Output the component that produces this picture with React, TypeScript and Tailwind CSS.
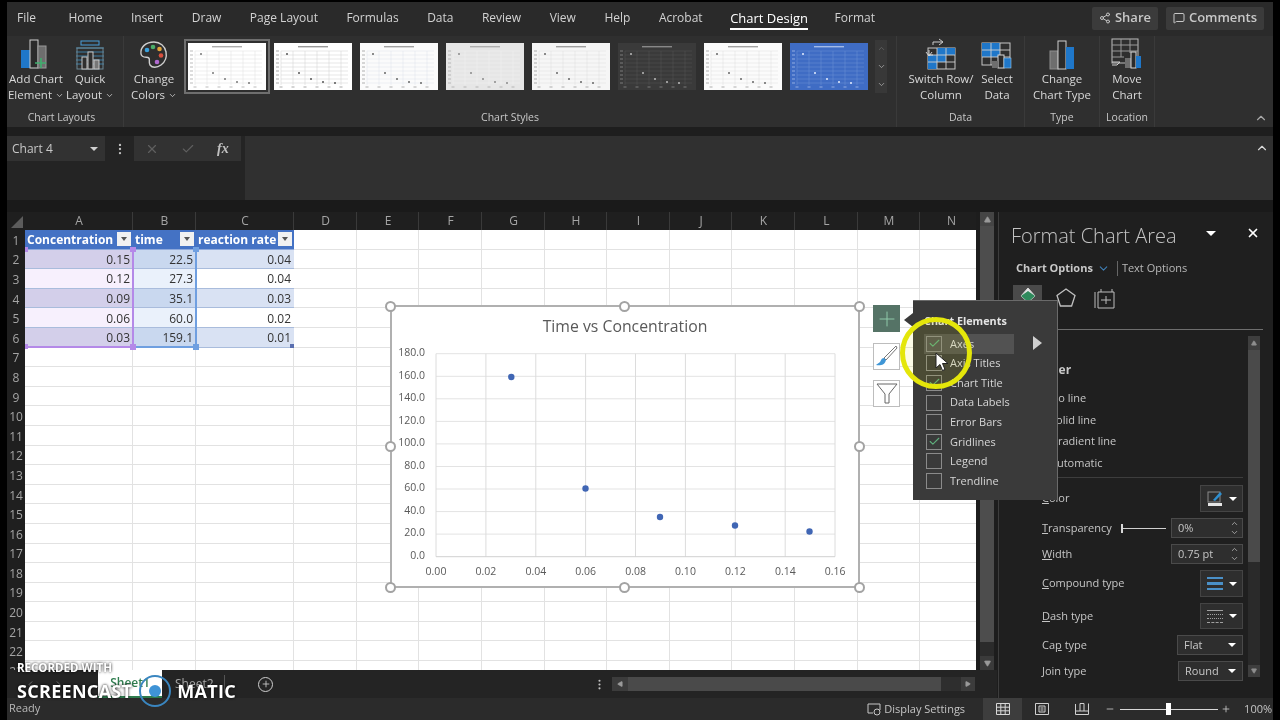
import React from 'react';
import { ChevronDown, ChevronUp, ChevronLeft, ChevronRight, X, Check, Share2, MessageSquare, MoreVertical, Plus, Minus, Triangle } from 'lucide-react';

const tabs = ['File', 'Home', 'Insert', 'Draw', 'Page Layout', 'Formulas', 'Data', 'Review', 'View', 'Help', 'Acrobat', 'Chart Design', 'Format'];
const colLabels = ['A', 'B', 'C', 'D', 'E', 'F', 'G', 'H', 'I', 'J', 'K', 'L', 'M', 'N'];
const rowNumbers = Array.from({ length: 23 }, (_, i) => i + 1);
const tableRows = [
  ['0.15', '22.5', '0.04'],
  ['0.12', '27.3', '0.04'],
  ['0.09', '35.1', '0.03'],
  ['0.06', '60.0', '0.02'],
  ['0.03', '159.1', '0.01'],
];
const chartPoints = [
  [511.3, 377],
  [585.5, 488.5],
  [660, 517],
  [735, 525.5],
  [809.5, 531.5],
];
const thumbDots = [
  [13, 11],
  [25, 30],
  [37, 36],
  [49, 39],
  [61, 40],
];
const thumbs = [
  { bg: '#ffffff', line: '#dcdcdc', ink: '#777777' },
  { bg: '#ffffff', line: '#cccccc', ink: '#555555' },
  { bg: '#fbfbfb', line: '#dde3ea', ink: '#666666' },
  { bg: '#e6e6e6', line: '#f2f2f2', ink: '#8a8a8a' },
  { bg: '#f6f6f6', line: '#dcdcdc', ink: '#666666' },
  { bg: '#3a3a3a', line: '#555555', ink: '#bdbdbd' },
  { bg: '#fbfbfb', line: '#dcdcdc', ink: '#666666' },
  { bg: '#3f6cc4', line: '#6f92d6', ink: '#e6eeff' },
];
const elements = [
  { name: 'Axes', on: true },
  { name: 'Axis Titles', on: false },
  { name: 'Chart Title', on: true },
  { name: 'Data Labels', on: false },
  { name: 'Error Bars', on: false },
  { name: 'Gridlines', on: true },
  { name: 'Legend', on: false },
  { name: 'Trendline', on: false },
];

const Thumb = ({ bg, line, ink }: { bg: string; line: string; ink: string }) => (
  <svg viewBox="0 0 78 47" className="w-[78px] h-[47px] shrink-0">
    <rect width="78" height="47" fill={bg} />
    {[8, 12, 16, 20, 24, 28, 32, 36, 40].map((y) => (
      <g key={y}>
        <line x1="7" x2="74" y1={y} y2={y} stroke={line} strokeWidth="0.5" />
        <rect x="2" y={y - 0.5} width="3" height="1" fill={ink} opacity="0.5" />
      </g>
    ))}
    {[7, 19, 31, 43, 55, 67].map((x) => (
      <g key={x}>
        <line x1={x} x2={x} y1="8" y2="42" stroke={line} strokeWidth="0.5" />
        <rect x={x - 1.5} y="43.500" width="3" height="1" fill={ink} opacity="0.5" />
      </g>
    ))}
    <rect x="24" y="3" width="30" height="1.4" fill={ink} opacity="0.6" />
    {thumbDots.map(([x, y]) => (
      <circle key={x} cx={x} cy={y} r="1" fill={ink} />
    ))}
  </svg>
);

const RibbonButton = ({ icon, line1, line2, caret, className }: { icon: React.ReactNode; line1: string; line2: string; caret?: boolean; className: string }) => (
  <div className={`flex flex-col items-center shrink-0 text-[11.5px] ${className}`}>
    <div className="h-[34px] mb-[1px] flex items-end justify-center">{icon}</div>
    <span className="h-[16px] leading-[16px] whitespace-nowrap">{line1}</span>
    <span className="h-[16px] leading-[16px] whitespace-nowrap flex items-center">
      {line2}
      {caret && <ChevronDown size={9} className="ml-[3px]" />}
    </span>
  </div>
);

const GroupLabel = ({ children, className = '' }: { children: string; className?: string }) => (
  <div className={`text-center leading-[16px] mt-[3px] font-medium text-[#c8c8c8] text-[10.5px] ${className}`}>{children}</div>
);

const AddChartIcon = () => (
  <svg width="32" height="32" viewBox="0 0 32 32">
    <rect x="1" y="12" width="9" height="18" fill="#1f77c9" />
    <rect x="10" y="2" width="8" height="28" fill="#2b2b2b" stroke="#d0d0d0" />
    <rect x="18" y="8" width="8" height="22" fill="#6e6e6e" stroke="#9a9a9a" />
    <path d="M21 20v10M15 25h11" stroke="#3fae6e" strokeWidth="1.6" />
  </svg>
);

const QuickLayoutIcon = () => (
  <svg width="30" height="30" viewBox="0 0 30 30" fill="none">
    <rect x="6" y="1" width="18" height="4" stroke="#4a9fdc" />
    {[8, 12, 16, 20, 24].map((y) => (
      <line key={y} x1="1" x2="29" y1={y} y2={y} stroke="#3d7ea6" />
    ))}
    <rect x="2" y="8" width="26" height="21" stroke="#6d8795" />
    <rect x="7" y="17" width="5" height="12" fill="#2f2f2f" stroke="#c8c8c8" />
    <rect x="13" y="12" width="5" height="17" fill="#2f2f2f" stroke="#c8c8c8" />
    <rect x="19" y="20" width="5" height="9" fill="#777" stroke="#c8c8c8" />
  </svg>
);

const PaletteIcon = () => (
  <svg width="30" height="30" viewBox="0 0 30 30" fill="none">
    <path d="M15 2C7 2 1 7 2 14c.6 4 5 3 7 3.500 3 .8 0 4.500 2 7.500 2 3 7 3 11 0 4-3 6-8 5-13C26 6 21 2 15 2Z" fill="#2e2e2e" stroke="#cfcfcf" strokeWidth="1.4" />
    <circle cx="8" cy="10" r="2.300" fill="#39a0dc" />
    <circle cx="14" cy="7" r="2.300" fill="#4cae6a" />
    <circle cx="20.500" cy="9" r="2.300" fill="#e0a43a" />
    <circle cx="22" cy="15.500" r="2.300" fill="#d8503f" />
    <circle cx="18" cy="22" r="2.300" fill="#b06ad0" />
  </svg>
);

const SwitchRowIcon = () => (
  <svg width="32" height="32" viewBox="0 0 32 32" fill="none">
    <rect x="3" y="10" width="27" height="21" stroke="#c8c8c8" />
    <rect x="12" y="10" width="18" height="7" fill="#1f77c9" />
    <rect x="3" y="17" width="18" height="7" fill="#1f77c9" />
    <rect x="3" y="24" width="9" height="7" fill="#1f77c9" />
    <path d="M3 17h27M3 24h27M12 10v21M21 10v21" stroke="#d0d0d0" strokeWidth="0.9" />
    <path d="M4 12v5h4M1 14l3 4 3-4M8 7V4h9M14 1l4 3-4 3" stroke="#dcdcdc" strokeWidth="0.9" />
  </svg>
);

const SelectDataIcon = () => (
  <svg width="32" height="32" viewBox="0 0 32 32" fill="none">
    <rect x="1" y="5" width="28" height="22" stroke="#c8c8c8" />
    <rect x="1" y="5" width="18" height="14" fill="#1f77c9" />
    <path d="M1 12h28M1 19h28M10 5v22M19 5v22" stroke="#d0d0d0" strokeWidth="0.9" />
    <rect x="17" y="17" width="6" height="13" fill="#2b2b2b" stroke="#d8d8d8" />
    <rect x="23" y="20" width="7" height="10" fill="#1f77c9" stroke="#9cc8e8" strokeWidth="0.6" />
    <rect x="11" y="23" width="6" height="7" fill="#6e6e6e" />
  </svg>
);

const ChangeTypeIcon = () => (
  <svg width="26" height="30" viewBox="0 0 26 30">
    <rect x="1" y="11" width="8" height="18" fill="#6e6e6e" stroke="#8e8e8e" />
    <rect x="9" y="1" width="8" height="28" fill="#2b2b2b" stroke="#d0d0d0" />
    <rect x="17" y="7" width="8" height="22" fill="#1f77c9" />
  </svg>
);

const MoveChartIcon = () => (
  <svg width="32" height="32" viewBox="0 0 32 32" fill="none">
    <rect x="1" y="1" width="26" height="24" stroke="#bdbdbd" />
    <path d="M1 7h26M1 13h26M1 19h12M10 1v18M19 1v14" stroke="#9a9a9a" />
    <rect x="14" y="20" width="6" height="10" fill="#6e6e6e" />
    <rect x="20" y="14" width="5" height="16" fill="#2b2b2b" stroke="#d8d8d8" />
    <rect x="25" y="18" width="5" height="12" fill="#1f77c9" />
    <path d="M1 24h8l-3 3H1" stroke="#cfcfcf" />
  </svg>
);

const Handle = ({ className }: { className: string }) => (
  <div className={`absolute w-[11px] h-[11px] rounded-full bg-white border-2 border-[#a3a3a3] ${className}`} />
);

const SpinBox = ({ value }: { value: string }) => (
  <div className="ml-auto w-[72px] h-full bg-[#2e2e2e] border border-[#4a4a4a] flex items-center pl-[6px] text-[#c4c4c4]">
    <span>{value}</span>
    <div className="ml-auto mr-[3px] flex flex-col text-[#bdbdbd]">
      <ChevronUp size={9} />
      <ChevronDown size={9} />
    </div>
  </div>
);

const IconPick = ({ children }: { children: React.ReactNode }) => (
  <div className="ml-auto w-[43px] h-full bg-[#2e2e2e] border border-[#444444] flex items-center justify-center gap-[6px]">
    {children}
    <div className="w-0 h-0 border-x-[4px] border-x-transparent border-t-[4px] border-t-white" />
  </div>
);

const SelectBox = ({ value, className }: { value: string; className: string }) => (
  <div className={`ml-auto h-full bg-[#2e2e2e] border border-[#4a4a4a] flex items-center pl-[6px] pr-[6px] justify-between text-[#c8c8c8] ${className}`}>
    <span>{value}</span>
    <div className="w-0 h-0 border-x-[4px] border-x-transparent border-t-[4px] border-t-white" />
  </div>
);

const PaneLabel = ({ first, rest }: { first: string; rest: string }) => (
  <span className="text-[#c6c6c6] pl-[12px] whitespace-nowrap">
    <u>{first}</u>
    {rest}
  </span>
);

export default function App() {
  return (
    <div className="relative w-[1280px] h-[720px] overflow-hidden bg-black px-[7px] pt-[2px] text-[12px] text-[#d6d6d6] blur-[0.3px] font-['Open_Sans',sans-serif]">
      {/* tab strip */}
      <div className="h-[34px] bg-[#2a2a2a] flex items-center pl-[10px] pb-[2px]">
        <div className="flex gap-[28.5px] text-[#d2d2d2]">
          {tabs.map((t) => (
            <span key={t} className={`relative whitespace-nowrap ${t === 'File' ? 'mr-[4px]' : ''} ${t === 'Chart Design' ? '-ml-[1px] -mr-[2px] text-white text-[13px] leading-[18px]' : ''}`}>
              {t}
              {t === 'Chart Design' && <span className="absolute left-0 right-0 top-[19px] h-[2px] bg-white" />}
            </span>
          ))}
        </div>
        <div className="ml-auto mr-[9px] flex gap-[8px] text-[13px] font-semibold text-[#c8c8c8]">
          <div className="w-[66px] h-[23px] bg-[#3b3b3b] rounded-[2px] flex items-center justify-center gap-[4px]">
            <Share2 size={12} />
            Share
          </div>
          <div className="w-[98px] h-[23px] bg-[#3b3b3b] rounded-[2px] flex items-center justify-center gap-[4px]">
            <MessageSquare size={12} />
            Comments
          </div>
        </div>
      </div>

      {/* ribbon */}
      <div className="h-[91px] bg-[#2f2f2f] flex text-[#d8d8d8]">
        <div className="w-[117px] flex flex-col border-r border-[#3a3a3a]">
          <div className="h-[70px] flex">
            <RibbonButton className="w-[58px]" icon={<AddChartIcon />} line1="Add Chart" line2="Element" caret />
            <RibbonButton className="w-[50px]" icon={<QuickLayoutIcon />} line1="Quick" line2="Layout" caret />
          </div>
          <GroupLabel className="-ml-[7px]">Chart Layouts</GroupLabel>
        </div>
        <div className="w-[773px] flex flex-col border-r border-[#3a3a3a]">
          <div className="h-[70px] flex">
            <RibbonButton className="w-[60px]" icon={<PaletteIcon />} line1="Change" line2="Colors" caret />
            <div className="flex gap-[8px] pt-[7px] pl-[4px] items-start">
              {thumbs.map((t, i) => (
                <div key={i} className={i === 0 ? 'relative' : ''}>
                  {i === 0 && <div className="absolute -left-[4px] -top-[4px] w-[86px] h-[55px] border-2 border-[#6f6f6f]" />}
                  <Thumb {...t} />
                </div>
              ))}
              <div className="-ml-[1px] flex flex-col w-[12px] h-[53px] -mt-[3px] text-[#b0b0b0] bg-[#383838] items-center justify-around">
                <ChevronUp size={9} className="opacity-40" />
                <ChevronDown size={9} />
                <ChevronDown size={9} />
              </div>
            </div>
          </div>
          <GroupLabel>Chart Styles</GroupLabel>
        </div>
        <div className="w-[128px] flex flex-col border-r border-[#3a3a3a]">
          <div className="h-[70px] flex pl-[8px]">
            <RibbonButton className="w-[72px]" icon={<SwitchRowIcon />} line1="Switch Row/" line2="Column" />
            <RibbonButton className="w-[40px]" icon={<SelectDataIcon />} line1="Select" line2="Data" />
          </div>
          <GroupLabel>Data</GroupLabel>
        </div>
        <div className="w-[75px] flex flex-col border-r border-[#3a3a3a]">
          <div className="h-[70px] flex justify-center">
            <RibbonButton className="w-[70px]" icon={<ChangeTypeIcon />} line1="Change" line2="Chart Type" />
          </div>
          <GroupLabel>Type</GroupLabel>
        </div>
        <div className="w-[55px] flex flex-col border-r border-[#3a3a3a]">
          <div className="h-[70px] flex justify-center">
            <RibbonButton className="w-[50px]" icon={<MoveChartIcon />} line1="Move" line2="Chart" />
          </div>
          <GroupLabel>Location</GroupLabel>
        </div>
        <div className="flex-1 flex items-end justify-end pr-[5px] pb-[2px]">
          <ChevronUp size={14} className="text-[#a8a8a8]" />
        </div>
      </div>

      <div className="h-[9px] bg-[#1e1e1e]" />

      {/* formula bar */}
      <div className="h-[64px] bg-[#242424] flex items-start">
        <div className="w-[98px] h-[25px] bg-[#323232] flex items-center justify-between pl-[5px] pr-[7px] text-[#c8c8c8]">
          Chart 4
          <div className="w-0 h-0 border-x-[4px] border-x-transparent border-t-[4px] border-t-[#d0d0d0]" />
        </div>
        <div className="w-[29px] h-[25px] flex items-center justify-center">
          <MoreVertical size={14} className="text-[#c0c0c0]" />
        </div>
        <div className="w-[107px] h-[25px] bg-[#323232] flex items-center pl-[11px] gap-[22px] text-[#5f5f5f]">
          <X size={14} />
          <Check size={14} />
          <span className="font-['Liberation_Serif',serif] italic font-bold text-[14px] text-[#c0c0c0]">fx</span>
        </div>
        <div className="ml-[4px] flex-1 h-full bg-[#303030] flex justify-end pt-[5px] pr-[4px]">
          <ChevronUp size={14} className="text-[#d8d8d8]" />
        </div>
      </div>

      <div className="h-[12px] bg-[#1a1a1a]" />

      {/* sheet + task pane */}
      <div className="h-[486px] flex bg-[#1d1d1d]">
        <div className="w-[990px] h-full flex flex-col shrink-0">
          <div className="h-[458px] flex">
            <div className="relative w-[969px] h-full overflow-hidden bg-white">
              <div className="grid grid-cols-[18px_108px_63px_98px_63px_62px_63px_63px_62px_63px_62px_63px_63px_62px_63px] grid-rows-[18px_repeat(23,19.6px)] text-[#2b2b2b]">
                <div className="bg-[#1f1f1f] flex items-center justify-center">
                  <div className="w-0 h-0 ml-[2px] mt-[1px] border-l-[12px] border-l-transparent border-b-[12px] border-b-[#5c5c5c]" />
                </div>
                {colLabels.map((c) => (
                  <div key={c} className="bg-[#1f1f1f] border-r border-[#3a3a3a] flex items-center justify-center pl-[1px] text-[#a5a5a5]">
                    {c}
                  </div>
                ))}
                {rowNumbers.map((r) => (
                  <React.Fragment key={r}>
                    <div className="bg-[#1f1f1f] flex items-center justify-center pt-[2px] text-[#a5a5a5]">{r}</div>
                    {colLabels.map((c, ci) => {
                      if (r === 1 && ci < 3) {
                        const label = ['Concentration', 'time', 'reaction rate'][ci];
                        return (
                          <div key={c} className="bg-[#4472c4] text-white font-bold flex items-center px-[2px] pt-[2px] justify-between whitespace-nowrap border-b border-[#8ea9db]">
                            <span>{label}</span>
                            <div className="w-[14px] h-[14px] -mt-[2px] bg-[#f1f1f1] flex items-center justify-center">
                              <div className="w-0 h-0 border-x-[3.5px] border-x-transparent border-t-[4px] border-t-[#555555]" />
                            </div>
                          </div>
                        );
                      }
                      if (r >= 2 && r <= 6 && ci < 3) {
                        const even = r % 2 === 0;
                        const fill = ci === 0 ? (even ? 'bg-[#d3cfea]' : 'bg-[#f7f0fd]') : ci === 1 ? (even ? 'bg-[#c9d8ef]' : 'bg-[#eaf1fb]') : even ? 'bg-[#d9e2f3]' : 'bg-white';
                        return (
                          <div key={c} className={`${fill} border-b border-[#a9bcdc] flex items-center justify-end pr-[3px] pt-[2px] text-[#333333]`}>
                            {tableRows[r - 2][ci]}
                          </div>
                        );
                      }
                      return <div key={c} className="border-r border-b border-[#e2e2e2]" />;
                    })}
                  </React.Fragment>
                ))}
              </div>
            </div>
            <div className="ml-[4px] w-[14px] h-full bg-[#2b2b2b] flex flex-col">
              <div className="h-[14px] bg-[#454545] flex items-center justify-center">
                <Triangle size={7} className="fill-[#9a9a9a] text-[#9a9a9a]" />
              </div>
              <div className="h-[416px] bg-[#4d4d4d]" />
              <div className="mt-auto h-[14px] bg-[#3a3a3a] flex items-center justify-center">
                <Triangle size={7} className="fill-[#9a9a9a] text-[#9a9a9a] rotate-180" />
              </div>
            </div>
          </div>
          {/* sheet tabs */}
          <div className="h-[28px] flex items-center bg-[#242424]">
            <ChevronLeft size={11} className="ml-[18px] text-[#777777]" />
            <ChevronRight size={11} className="ml-[17px] text-[#777777]" />
            <div className="ml-[34px] w-[64px] h-full bg-white text-[#2f7d4f] font-semibold flex items-center justify-center border-b-2 border-[#2f7d4f]">Sheet1</div>
            <div className="ml-[13px] w-[40px] text-[#a8a8a8]">Sheet2</div>
            <div className="ml-[9px] w-px h-[18px] bg-[#555555]" />
            <div className="ml-[33px] w-[15px] h-[15px] rounded-full border border-[#cfcfcf] flex items-center justify-center">
              <Plus size={10} className="text-[#cfcfcf]" />
            </div>
            <MoreVertical size={13} className="ml-[320px] text-[#c0c0c0]" />
            <div className="ml-[6px] w-[363px] h-[14px] bg-[#2e2e2e] flex items-center justify-between">
              <div className="w-[16px] h-full bg-[#3c3c3c] flex items-center justify-center">
                <Triangle size={6} className="fill-[#9a9a9a] text-[#9a9a9a] -rotate-90" />
              </div>
              <div className="flex-1 h-full bg-[#4a4a4a] mr-[20px]" />
              <div className="w-[14px] h-full bg-[#3c3c3c] flex items-center justify-center">
                <Triangle size={6} className="fill-[#9a9a9a] text-[#9a9a9a] rotate-90" />
              </div>
            </div>
          </div>
        </div>

        {/* format chart area pane */}
        <div className="flex-1 border-l border-[#3d3d3d] ml-[1px] bg-[#1f1f1f] flex flex-col text-[11px]">
          <div className="h-[48px] flex items-center pl-[12px]">
            <span className="text-[20px] font-light text-[#c4c4c4] whitespace-nowrap">Format Chart Area</span>
            <div className="ml-[29px] -mt-[6px] w-0 h-0 border-x-[5px] border-x-transparent border-t-[5px] border-t-white" />
            <X size={14} strokeWidth={3} className="ml-[30px] -mt-[6px] text-white" />
          </div>
          <div className="h-[16px] flex items-center pl-[17px]">
            <span className="font-bold text-[#c8c8c8]">Chart Options</span>
            <ChevronDown size={13} className="ml-[4px] text-[#3f7fb5]" />
            <div className="ml-[7px] w-px h-[15px] bg-[#666666]" />
            <span className="ml-[4px] text-[#b8b8b8]">Text Options</span>
          </div>
          <div className="mt-[9px] h-[27px] flex items-center pl-[14px]">
            <div className="w-[29px] h-[27px] bg-[#4a4a4a] flex items-start justify-center pt-[2px]">
              <svg width="20" height="16" viewBox="0 0 20 16">
                <path d="M10 1 3 9l7 6 7-6Z" fill="#e8e8e8" stroke="#d8d8d8" />
                <path d="M3 9l7-5 7 5-7 6Z" fill="#2f8a5c" />
              </svg>
            </div>
            <svg width="24" height="24" viewBox="0 0 24 24" fill="none" stroke="#c0c0c0" strokeWidth="1.3" className="ml-[12px]">
              <path d="M12 2l9 6.500-3.400 10.500H6.400L3 8.500Z" />
            </svg>
            <svg width="22" height="24" viewBox="0 0 22 24" fill="none" stroke="#bdbdbd" className="ml-[16px]">
              <path d="M1 5v16M4 5h16v16H4ZM7 2v3M18 2v3M7 13h10M12 9v8" />
            </svg>
          </div>
          <div className="mt-[17px] ml-[14px] mr-[10px] h-px bg-[#6e6e6e]" />
          <div className="mt-[6px] flex h-[345px] overflow-hidden">
            <div className="flex-1 min-w-0 pl-[31px] pr-[5px] flex flex-col">
              <div className="mt-[24px] h-[20px] shrink-0 flex items-center text-[12px] font-bold text-[#c8c8c8]">Border</div>
              <div className="mt-[8px] h-[20px] shrink-0 flex items-center pl-[20px] text-[#c6c6c6]">No line</div>
              <div className="mt-[2px] h-[20px] shrink-0 flex items-center pl-[20px] text-[#c6c6c6]">Solid line</div>
              <div className="mt-[1px] h-[20px] shrink-0 flex items-center pl-[20px] text-[#c6c6c6]">Gradient line</div>
              <div className="mt-[2px] h-[20px] shrink-0 flex items-center pl-[20px] text-[#c6c6c6]">Automatic</div>
              <div className="mt-[4px] h-px shrink-0 bg-[#3d3d3d]" />
              <div className="mt-[7px] h-[27px] shrink-0 flex items-center">
                <PaneLabel first="C" rest="olor" />
                <IconPick>
                  <svg width="16" height="16" viewBox="0 0 16 16" fill="none">
                    <rect x="1" y="1" width="12" height="10" stroke="#8a8a8a" />
                    <path d="M6 9l7-8 2 2-7 7Z" fill="#2e8fd0" />
                    <rect x="1" y="12" width="14" height="3" fill="#e6e6e6" />
                  </svg>
                </IconPick>
              </div>
              <div className="mt-[6px] h-[20px] shrink-0 flex items-center">
                <PaneLabel first="T" rest="ransparency" />
                <div className="ml-[9px] flex items-center w-[45px] shrink-0">
                  <div className="w-[2px] h-[9px] bg-[#d8d8d8]" />
                  <div className="flex-1 h-px bg-[#d0d0d0]" />
                </div>
                <SpinBox value="0%" />
              </div>
              <div className="mt-[6px] h-[20px] shrink-0 flex items-center">
                <PaneLabel first="W" rest="idth" />
                <SpinBox value="0.75 pt" />
              </div>
              <div className="mt-[6px] h-[27px] shrink-0 flex items-center">
                <PaneLabel first="C" rest="ompound type" />
                <IconPick>
                  <div className="w-[16px] flex flex-col gap-[3px]">
                    <div className="h-[2px] bg-[#4a90c8]" />
                    <div className="h-[3px] bg-[#4a90c8]" />
                    <div className="h-[2px] bg-[#4a90c8]" />
                  </div>
                </IconPick>
              </div>
              <div className="mt-[6px] h-[26px] shrink-0 flex items-center">
                <PaneLabel first="D" rest="ash type" />
                <IconPick>
                  <div className="w-[16px] flex flex-col gap-[3px]">
                    <div className="h-[1px] bg-[#a0a0a0]" />
                    <div className="h-0 border-t border-dotted border-[#a0a0a0]" />
                    <div className="h-0 border-t border-dotted border-[#a0a0a0]" />
                    <div className="h-0 border-t border-dashed border-[#a0a0a0]" />
                  </div>
                </IconPick>
              </div>
              <div className="mt-[6px] h-[20px] shrink-0 flex items-center">
                <span className="text-[#c6c6c6] pl-[12px]">Ca<u>p</u> type</span>
                <SelectBox value="Flat" className="w-[66px]" />
              </div>
              <div className="mt-[6px] h-[20px] shrink-0 flex items-center">
                <PaneLabel first="J" rest="oin type" />
                <SelectBox value="Round" className="w-[65px]" />
              </div>
            </div>
            <div className="w-[12px] h-[341px] mr-[13px] bg-[#2a2a2a] flex flex-col">
              <div className="h-[14px] bg-[#3e3e3e] flex items-center justify-center">
                <Triangle size={6} className="fill-[#8e8e8e] text-[#8e8e8e]" />
              </div>
              <div className="h-[212px] bg-[#4a4a4a]" />
              <div className="mt-auto h-[12px] bg-[#3e3e3e] flex items-center justify-center">
                <Triangle size={6} className="fill-[#8e8e8e] text-[#8e8e8e] rotate-180" />
              </div>
            </div>
          </div>
        </div>
      </div>

      {/* status bar */}
      <div className="h-[22px] bg-[#2b2b2b] flex items-center pl-[2px] text-[#b8b8b8] text-[11px]">
        <span className="-mt-[1px]">Ready</span>
        <svg width="16" height="14" viewBox="0 0 16 14" fill="none" stroke="#c8c8c8" className="ml-[826px]">
          <path d="M2 11V2h12v6M2 11h5" />
          <circle cx="11" cy="10" r="3" />
        </svg>
        <span className="ml-[2px] whitespace-nowrap text-[#c4c4c4]">Display Settings</span>
        <div className="ml-[18px] w-[39px] h-[22px] bg-[#3d3d3d] flex items-center justify-center">
          <svg width="14" height="12" viewBox="0 0 14 12" fill="none" stroke="#d8d8d8">
            <path d="M.5.5h13v11H.5ZM.5 4.200h13M.5 7.800h13M4.800.5v11M9.200.5v11" />
          </svg>
        </div>
        <svg width="14" height="12" viewBox="0 0 14 12" fill="none" stroke="#d0d0d0" className="ml-[13px]">
          <path d="M.5.5h13v11H.5ZM4 3h6v6H4ZM5.500 5h3M5.500 7h3" />
        </svg>
        <svg width="14" height="12" viewBox="0 0 14 12" fill="none" stroke="#d0d0d0" className="ml-[26px]">
          <path d="M.5 1v10.500h13V.5M.5 8h13M5 .5V8M9 .5V8M5 .5h4" />
        </svg>
        <Minus size={10} className="ml-[16px] text-[#c8c8c8]" />
        <div className="ml-[5px] relative w-[98px] h-px bg-[#d8d8d8]">
          <div className="absolute left-[46px] -top-[6px] w-[5px] h-[12px] bg-white" />
        </div>
        <Plus size={10} className="ml-[3px] text-[#c8c8c8]" />
        <span className="ml-[13px] text-[#c4c4c4]">100%</span>
      </div>

      {/* table range selection, over the cells */}
      <div className="absolute left-[25px] top-[346px] w-[108px] h-[2px] bg-[#b489e8]" />
      <div className="absolute left-[132px] top-[249px] w-[2px] h-[98px] bg-[#b489e8]" />
      <div className="absolute left-[134px] top-[346px] w-[62px] h-[2px] bg-[#6f9fe0]" />
      <div className="absolute left-[195px] top-[249px] w-[2px] h-[98px] bg-[#6f9fe0]" />
      <div className="absolute left-[25px] top-[344px] w-[3px] h-[5px] bg-[#b489e8]" />
      <div className="absolute left-[25px] top-[247px] w-[3px] h-[5px] bg-[#b489e8]" />
      <div className="absolute left-[130px] top-[344px] w-[6px] h-[6px] bg-[#b489e8]" />
      <div className="absolute left-[130px] top-[247px] w-[6px] h-[5px] bg-[#b489e8]" />
      <div className="absolute left-[193px] top-[344px] w-[6px] h-[6px] bg-[#6f9fe0]" />
      <div className="absolute left-[193px] top-[247px] w-[6px] h-[5px] bg-[#6f9fe0]" />
      <div className="absolute left-[290px] top-[344px] w-[4px] h-[4px] bg-[#5a6fb0]" />

      {/* floating chart */}
      <div className="absolute left-[390px] top-[305px] w-[470px] h-[283px] bg-white border-2 border-[#b0b0b0]" />
      <svg className="absolute left-0 top-0 w-[1280px] h-[720px]" viewBox="0 0 1280 720">
        {[353.7, 376.3, 398.8, 421.4, 443.9, 466.5, 489, 511.6, 534.1].map((y) => (
          <line key={y} x1="436" x2="835" y1={y} y2={y} stroke="#e3e3e3" />
        ))}
        {[436, 485.9, 535.8, 585.6, 635.5, 685.4, 735.3, 785.2, 835].map((x) => (
          <line key={x} x1={x} x2={x} y1="353.700" y2="556.700" stroke="#dcdcdc" />
        ))}
        <line x1="436" x2="835" y1="556.700" y2="556.700" stroke="#d0d0d0" />
        {chartPoints.map(([x, y]) => (
          <circle key={x} cx={x} cy={y} r="3.200" fill="#4066b4" />
        ))}
        <g fontFamily="'Open Sans', sans-serif" fontSize="10.500" fill="#595959" textAnchor="end">
          {['180.0', '160.0', '140.0', '120.0', '100.0', '80.0', '60.0', '40.0', '20.0', '0.0'].map((l, i) => (
            <text key={l} x="425" y={356 + i * 22.55}>
              {l}
            </text>
          ))}
        </g>
        <g fontFamily="'Open Sans', sans-serif" fontSize="10.500" fill="#595959" textAnchor="middle">
          {['0.00', '0.02', '0.04', '0.06', '0.08', '0.10', '0.12', '0.14', '0.16'].map((l, i) => (
            <text key={l} x={436 + i * 49.9} y="575">
              {l}
            </text>
          ))}
        </g>
        <text x="625" y="332" fontFamily="'Open Sans', sans-serif" fontSize="15.800" fill="#595959" textAnchor="middle">
          Time vs Concentration
        </text>
      </svg>
      <Handle className="left-[385px] top-[301px]" />
      <Handle className="left-[619px] top-[301px]" />
      <Handle className="left-[854px] top-[301px]" />
      <Handle className="left-[385px] top-[441px]" />
      <Handle className="left-[854px] top-[441px]" />
      <Handle className="left-[385px] top-[582px]" />
      <Handle className="left-[619px] top-[582px]" />
      <Handle className="left-[854px] top-[582px]" />

      {/* chart side buttons */}
      <div className="absolute left-[873px] top-[305px] w-[27px] h-[27px] bg-[#557366] flex items-center justify-center">
        <Plus size={24} strokeWidth={1} className="text-[#8fc9a8]" />
      </div>
      <div className="absolute left-[873px] top-[343px] w-[27px] h-[27px] bg-white border border-[#bdbdbd] flex items-center justify-center">
        <svg width="23" height="23" viewBox="0 0 23 23" fill="none">
          <path d="M21 1 9 13l2 2L22 3Z" fill="#fff" stroke="#777" />
          <path d="M9 13c-3 0-3 3-4 4s-3 2-4 3c4 1 9 0 10-5Z" fill="#3f96d6" />
        </svg>
      </div>
      <div className="absolute left-[873px] top-[380px] w-[27px] h-[27px] bg-white border border-[#bdbdbd] flex items-center justify-center">
        <svg width="22" height="23" viewBox="0 0 22 23" fill="none" stroke="#666">
          <path d="M1 2h20l-8 10v9H9v-9Z" />
        </svg>
      </div>

      {/* chart elements popup */}
      <div className="absolute left-[904px] top-[313px] w-0 h-0 border-y-[7px] border-y-transparent border-r-[9px] border-r-[#3a3a3a]" />
      <div className="absolute left-[913px] top-[300px] w-[145px] h-[200px] bg-[#3a3a3a] border-t border-r border-[#6a6a6a] pl-[11px] pt-[12px] text-[11px]">
        <div className="h-[16px] leading-[16px] font-bold text-[10.8px] text-[#e4e4e4] whitespace-nowrap">Chart Elements</div>
        <div className="mt-[5px] flex flex-col">
          {elements.map((el, i) => (
            <div key={el.name} className={`h-[19.6px] w-[90px] flex items-center pl-[2px] ${i === 0 ? 'bg-[#525252]' : ''}`}>
              <div className="w-[16px] h-[16px] shrink-0 border border-[#8a8a8a] flex items-center justify-center">
                {el.on && <Check size={13} className="text-[#5fae7c]" />}
              </div>
              <span className="ml-[8px] whitespace-nowrap text-[#d6d6d6]">{el.name}</span>
            </div>
          ))}
        </div>
        <div className="absolute left-[120px] top-[35px] w-0 h-0 border-y-[7px] border-y-transparent border-l-[9px] border-l-[#d0d0d0]" />
      </div>

      {/* recorder highlight + cursor */}
      <div className="absolute left-[900px] top-[317px] w-[72px] h-[72px] rounded-full border-[5px] border-[#e4e60a] bg-[#e4e60a]/10" />
      <svg className="absolute left-[935px] top-[352px]" width="14" height="20" viewBox="0 0 14 20">
        <path d="M1 1v15l4-3.500 2.500 6 2.500-1-2.500-6H13Z" fill="#fff" stroke="#222" />
      </svg>

      {/* recorder watermark */}
      <div className="absolute left-[17px] top-[660px] font-bold text-[11.5px] leading-[16px] text-white whitespace-nowrap [text-shadow:0_0_3px_#000]">RECORDED WITH</div>
      <div className="absolute left-[17px] top-[675px] w-[216px] flex items-center font-bold text-[18px] leading-[26px] text-white tracking-[0.3px] [text-shadow:0_0_3px_#000]">
        <span>SCREENCAST</span>
        <div className="ml-[7px] w-[32px] h-[32px] rounded-full border-2 border-[#3a86c0] flex items-center justify-center shrink-0">
          <div className="w-[12px] h-[12px] rounded-full bg-[#3f93d6]" />
        </div>
        <span className="ml-[6px]">MATIC</span>
      </div>
    </div>
  );
}
